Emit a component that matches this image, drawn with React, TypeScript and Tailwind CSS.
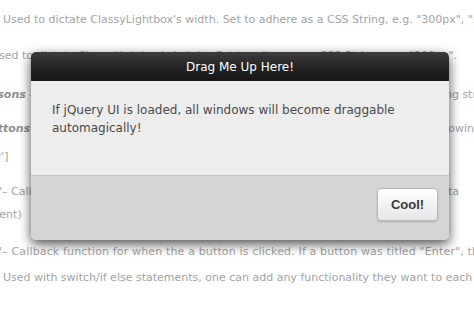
import React from 'react'

const font = { fontFamily: '"DejaVu Sans", Verdana, sans-serif' }

export default function App() {
  return (
    <div
      className="relative w-[474px] h-[322px] overflow-hidden bg-white text-[11px] leading-[16px] text-[#a3a3a3]"
      style={font}
    >
      <div className="flex flex-col whitespace-nowrap">
        <p className="mt-[12px] ml-[3px]">
          Used to dictate ClassyLightbox's width. Set to adhere as a CSS String, e.g. "300px", "50%".
        </p>
        <p className="mt-[20px] ml-[-9px]">
          Used to dictate ClassyLightbox's height. Set to adhere as a CSS String, e.g. "200px".
        </p>
        <p className="mt-[23px] ml-[-23px]">
          <i className="font-bold text-[#8d8d8d]">reasons</i> – An array of names for the window, which are then set by using the following strings
        </p>
        <p className="mt-[18px] ml-[-18px]">
          <i className="font-bold text-[#8d8d8d]">buttons</i> – An array of button names for the window, they will be rendered in the following order
        </p>
        <p className="mt-[12px] ml-[-86px]">['Cancel', 'Enter']</p>
        <p className="mt-[19px] ml-[-3px]">
          "– Callback function for when the lightbox window has opened, it is passed the data
        </p>
        <p className="mt-[7px] ml-[-29px]">(content)</p>
        <p className="mt-[21px] ml-[-3px] tracking-[0.15px]">
          "– Callback function for when the a button is clicked. If a button was titled "Enter", then
        </p>
        <p className="mt-[10px] ml-[3px]">
          Used with switch/if else statements, one can add any functionality they want to each button.
        </p>
      </div>

      <div className="absolute left-[31px] top-[52px] w-[418px] h-[188px] rounded-[5px] flex flex-col overflow-hidden shadow-[0_4px_12px_rgba(0,0,0,0.7)]">
        <div className="h-[29px] shrink-0 flex items-center justify-center bg-gradient-to-b from-[#3d3d3d] via-[#242424] to-[#161616] text-white text-[12px]">
          Drag Me Up Here!
        </div>
        <div className="h-[94px] shrink-0 bg-[#ededed] px-[21px] pt-[20px] text-[12px] leading-[18px] text-[#4a4a4a]">
          If jQuery UI is loaded, all windows will become draggable
          <br />
          automagically!
        </div>
        <div className="flex-1 bg-[#d5d5d5] border-t border-[#c2c2c2] flex justify-end items-start pt-[12px] pr-[11px]">
          <button
            className="w-[61px] h-[33px] rounded-[4px] border border-[#b9b9b9] bg-gradient-to-b from-white to-[#e6e6e6] text-[13px] font-bold text-[#3a3a3a] shadow-[0_1px_2px_rgba(0,0,0,0.2)]"
            style={{ fontFamily: '"Liberation Sans", Arial, sans-serif' }}
          >
            Cool!
          </button>
        </div>
      </div>
    </div>
  )
}
